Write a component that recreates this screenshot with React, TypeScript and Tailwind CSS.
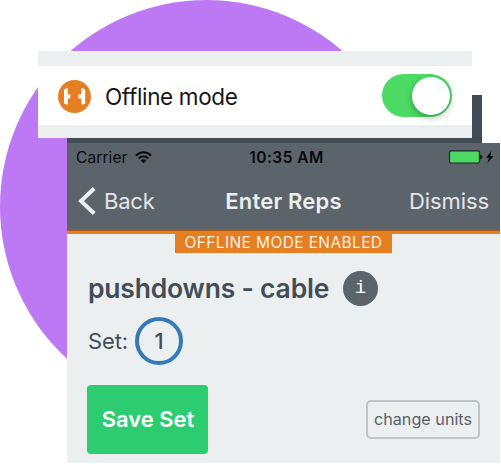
import React from "react";

function DumbbellBadge() {
  return (
    <svg className="mt-px h-[33px] w-[33px] shrink-0" viewBox="0 0 33 33">
      <circle cx="16.5" cy="16.5" r="16.5" fill="#e67e22" />
      <path
        d="M6 9.2h1.7v-.9h2.1v6.1h2.5v4H9.8v6.1H7.7v-.8H6zM27.2 9.2h-1.7v-.9h-2.1v6.1h-2.9v4h2.9v6.1h2.1v-.8h1.7z"
        fill="#fff"
      />
    </svg>
  );
}

function Toggle() {
  return (
    <div className="flex h-[43px] w-[70px] shrink-0 items-center justify-end rounded-full bg-[#4cd964] pr-[2px]">
      <div className="h-[38px] w-[38px] rounded-full bg-white shadow-[0_3px_6px_rgba(0,0,0,0.28)]" />
    </div>
  );
}

function SettingCard() {
  return (
    <section className="absolute left-[38px] top-[51px] w-[434px] border-t-[15px] border-b-[13px] border-[#ebeff0] bg-white">
      <div className="flex h-[59px] items-center pr-[20px] pl-[20px]">
        <DumbbellBadge />
        <span className="mt-[3px] ml-[14px] text-[22.5px] leading-none tracking-[-0.35px] whitespace-nowrap text-[#161616]">
          Offline mode
        </span>
        <div className="ml-auto">
          <Toggle />
        </div>
      </div>
    </section>
  );
}

function StatusBar() {
  return (
    <div className="grid h-[28px] grid-cols-3 items-center pr-[6px] pl-[9px] text-[#08090a]">
      <div className="flex items-center gap-[7px]">
        <span className="mt-px text-[15.5px] leading-none tracking-[0.1px]">Carrier</span>
        <svg className="h-[13px] w-[17px]" viewBox="0 0 17 13" fill="none" stroke="#08090a" strokeWidth="2">
          <path d="M1 4.6C5.3.2 11.7.2 16 4.6" />
          <path d="M3.7 7.4c2.8-2.7 6.8-2.7 9.6 0" />
          <path d="M5.8 9.4c1.6-1.5 3.8-1.5 5.4 0L8.5 12.3z" fill="#08090a" stroke="none" />
        </svg>
      </div>
      <span className="mt-px pl-[3px] text-center text-[15.5px] leading-none font-semibold tracking-[0.45px] whitespace-nowrap">
        10:35 AM
      </span>
      <div className="flex items-center justify-end">
        <svg className="h-[14px] w-[46px]" viewBox="0 0 46 14">
          <rect x="1.5" y=".8" width="30" height="12.2" rx="1.8" fill="#4cd964" stroke="#20262a" strokeWidth="1.2" />
          <path d="M32.3 4.7c2.5 0 2.5 4.6 0 4.6z" fill="#08090a" />
          <path d="M43.2 1 38 7.8h2.9l-1.4 5.2L45.6 6h-3.2z" fill="#08090a" />
        </svg>
      </div>
    </div>
  );
}

function NavBar() {
  return (
    <div className="flex h-[59px] items-center justify-between pr-[11px] pl-[11px] text-[22px] leading-none text-[#e4e6e8]">
      <div className="flex w-[125px] items-center">
        <svg className="h-[28px] w-[18px]" viewBox="0 0 18 28" fill="none" stroke="#ecf0f1" strokeWidth="4">
          <path d="M16.2 1.5 3 14l13.2 12.5" />
        </svg>
        <span className="ml-[8px] tracking-[-0.2px]">Back</span>
      </div>
      <span className="font-semibold tracking-[0.2px] whitespace-nowrap text-[#eceff0]">Enter Reps</span>
      <span className="w-[125px] text-right tracking-[-0.1px]">Dismiss</span>
    </div>
  );
}

function Phone() {
  return (
    <section className="ml-[67px] flex h-[320px] w-[433px] flex-col bg-[#ebeff0] text-[#424d58]">
      <header className="bg-[#5b636b]">
        <StatusBar />
        <NavBar />
      </header>
      <div className="h-[4px] border-t border-[#a95c18] bg-[#e67e22]" />
      <div className="mx-auto flex h-[19px] w-[217px] items-start justify-center bg-[#e67e22] text-[15.5px] leading-[18px] tracking-[0.38px] whitespace-nowrap text-[#fdf1e5]">
        OFFLINE MODE ENABLED
      </div>
      <div className="mt-[18px] flex h-[35px] items-center pl-[21px]">
        <h1 className="w-[241px] text-[26.5px] leading-none font-semibold tracking-[-0.2px] whitespace-nowrap">
          pushdowns - cable
        </h1>
        <span className="ml-[14px] flex h-[35px] w-[35px] items-center justify-center rounded-full bg-[#5b636b] font-['Liberation_Mono',monospace] text-[19px] leading-none text-white">
          i
        </span>
      </div>
      <div className="mt-[11px] flex h-[48px] items-center pl-[21px] text-[22px] leading-none">
        <span className="w-[40px] tracking-[-0.1px]">Set:</span>
        <span className="ml-[7px] flex h-[48px] w-[48px] items-center justify-center rounded-full border-4 border-[#337ab7] font-medium">
          1
        </span>
      </div>
      <div className="mt-[20px] flex items-center justify-between pr-[20px] pl-[20px]">
        <button className="h-[69px] w-[121px] rounded-[4px] bg-[#2ecc71] pl-px text-[22px] font-semibold whitespace-nowrap text-white">
          Save Set
        </button>
        <button className="h-[39px] w-[114px] rounded-[5px] border-2 border-[#bdc3c7] text-[16.2px] whitespace-nowrap text-[#57606a]">
          change units
        </button>
      </div>
    </section>
  );
}

export default function App() {
  return (
    <main className="relative h-[464px] w-[501px] overflow-hidden bg-white font-['Inter',sans-serif]">
      <div className="absolute top-0 left-0 h-[413px] w-[413px] rounded-full bg-[#bd78f3]" />
      <div className="relative pt-[95px]">
        <div className="ml-[67px] h-[48px] w-[415px] bg-[#404b54]" />
        <Phone />
      </div>
      <SettingCard />
    </main>
  );
}
